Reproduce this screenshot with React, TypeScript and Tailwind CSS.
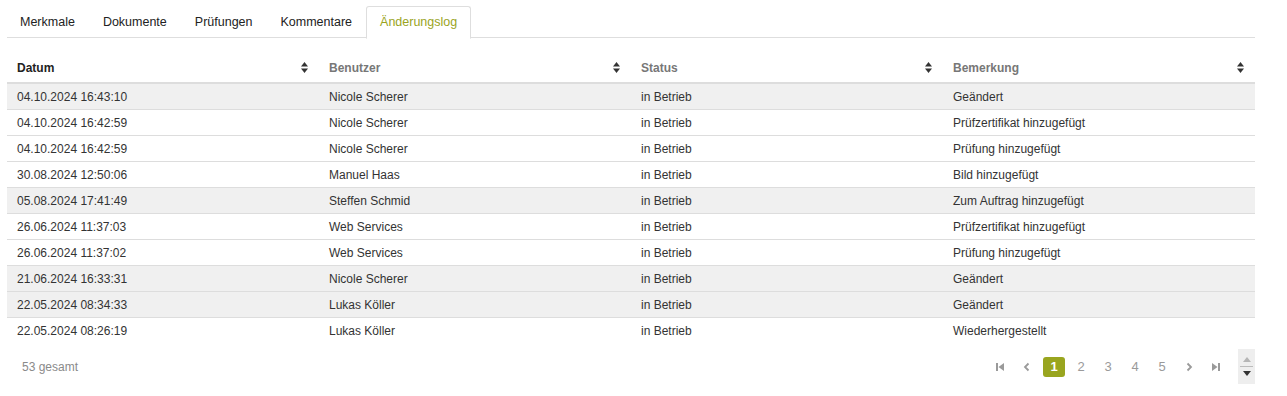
const tabs = ["Merkmale", "Dokumente", "Prüfungen", "Kommentare", "Änderungslog"];

const rows = [
  { date: "04.10.2024 16:43:10", user: "Nicole Scherer", note: "Geändert", shaded: true },
  { date: "04.10.2024 16:42:59", user: "Nicole Scherer", note: "Prüfzertifikat hinzugefügt" },
  { date: "04.10.2024 16:42:59", user: "Nicole Scherer", note: "Prüfung hinzugefügt" },
  { date: "30.08.2024 12:50:06", user: "Manuel Haas", note: "Bild hinzugefügt" },
  { date: "05.08.2024 17:41:49", user: "Steffen Schmid", note: "Zum Auftrag hinzugefügt", shaded: true },
  { date: "26.06.2024 11:37:03", user: "Web Services", note: "Prüfzertifikat hinzugefügt" },
  { date: "26.06.2024 11:37:02", user: "Web Services", note: "Prüfung hinzugefügt" },
  { date: "21.06.2024 16:33:31", user: "Nicole Scherer", note: "Geändert", shaded: true },
  { date: "22.05.2024 08:34:33", user: "Lukas Köller", note: "Geändert", shaded: true },
  { date: "22.05.2024 08:26:19", user: "Lukas Köller", note: "Wiederhergestellt" },
];

const columns = [
  { label: "Datum", active: true },
  { label: "Benutzer" },
  { label: "Status" },
  { label: "Bemerkung" },
];

function SortIcon() {
  return (
    <svg width="7" height="11" viewBox="0 0 7 11" className="shrink-0">
      <path d="M3.5 0 L7 4.5 H0 Z" fill="#333" />
      <path d="M3.5 11 L7 6.5 H0 Z" fill="#333" />
    </svg>
  );
}

function PageIcon({ kind }: { kind: "first" | "prev" | "next" | "last" }) {
  return (
    <svg width="10" height="10" viewBox="0 0 10 10">
      {kind === "first" && (
        <>
          <rect x="1" y="1" width="2" height="8" fill="#9a9a9a" />
          <path d="M9 1 V9 L3.5 5 Z" fill="#9a9a9a" />
        </>
      )}
      {kind === "last" && (
        <>
          <rect x="7" y="1" width="2" height="8" fill="#9a9a9a" />
          <path d="M1 1 V9 L6.5 5 Z" fill="#9a9a9a" />
        </>
      )}
      {kind === "prev" && <path d="M6.5 1.5 L3 5 L6.5 8.5" stroke="#9a9a9a" strokeWidth="1.8" fill="none" />}
      {kind === "next" && <path d="M3.5 1.5 L7 5 L3.5 8.5" stroke="#9a9a9a" strokeWidth="1.8" fill="none" />}
    </svg>
  );
}

export default function App() {
  return (
    <div className="min-h-[396px] bg-white font-['Liberation_Sans',Arial,sans-serif] text-[#333]">
      <div className="ml-[7px] w-[1248px] pt-[6px]">
        <div className="flex h-[32px] border-b border-[#dedede]">
          {tabs.map((t, i) => {
            const active = i === tabs.length - 1;
            return (
              <div
                key={t}
                className={`-mb-px flex h-[33px] items-center text-[12.5px] ${i === 0 ? "-ml-px" : ""} ${
                  active
                    ? "rounded-t-[3px] border border-b-white border-[#dedede] bg-white px-[13px] text-[#9aa41e]"
                    : "px-[14px] text-[#222]"
                }`}
              >
                {t}
              </div>
            );
          })}
        </div>

        <div className="mt-[12px]">
          <div className="grid h-[34px] grid-cols-4 border-b-[2px] border-[#dddddd] pt-[3px]">
            {columns.map((c) => (
              <div key={c.label} className="flex items-center justify-between pl-[10px] pr-[11px]">
                <span className={`text-[12px] font-bold ${c.active ? "text-[#222]" : "text-[#777]"}`}>
                  {c.label}
                </span>
                <SortIcon />
              </div>
            ))}
          </div>

          {rows.map((r, i) => (
            <div
              key={i}
              className={`grid h-[26px] grid-cols-4 text-[12px] ${
                i < rows.length - 1 ? "border-b border-[#dddddd]" : ""
              } ${r.shaded ? "bg-[#f0f0f0]" : "bg-white"}`}
            >
              <div className="flex items-center pl-[10px]">{r.date}</div>
              <div className="flex items-center pl-[10px]">{r.user}</div>
              <div className="flex items-center pl-[10px]">in Betrieb</div>
              <div className="flex items-center pl-[10px]">{r.note}</div>
            </div>
          ))}
        </div>

        <div className="flex h-[45px] items-center pl-[15px]">
          <span className="text-[12px] text-[#8a8a8a]">53 gesamt</span>
          <div className="ml-auto flex items-center gap-[5px]">
            <div className="flex h-[20px] w-[22px] items-center justify-center">
              <PageIcon kind="first" />
            </div>
            <div className="flex h-[20px] w-[22px] items-center justify-center">
              <PageIcon kind="prev" />
            </div>
            <div className="flex h-[20px] w-[22px] items-center justify-center rounded-[3px] bg-[#99a51f] text-[13px] font-bold text-white">
              1
            </div>
            {[2, 3, 4, 5].map((n) => (
              <div key={n} className="flex h-[20px] w-[22px] items-center justify-center text-[13px] text-[#9a9a9a]">
                {n}
              </div>
            ))}
            <div className="flex h-[20px] w-[22px] items-center justify-center">
              <PageIcon kind="next" />
            </div>
            <div className="flex h-[20px] w-[22px] items-center justify-center">
              <PageIcon kind="last" />
            </div>
            <div className="ml-[6px] flex h-[35px] w-[17px] flex-col items-center justify-center gap-[4px] bg-[#eeeeee]">
              <svg width="8" height="5" viewBox="0 0 8 5">
                <path d="M4 0 L8 5 H0 Z" fill="#b5b5b5" />
              </svg>
              <div className="h-px w-[13px] bg-[#bbbbbb]" />
              <svg width="8" height="5" viewBox="0 0 8 5">
                <path d="M4 5 L8 0 H0 Z" fill="#333" />
              </svg>
            </div>
          </div>
        </div>
      </div>
    </div>
  );
}
